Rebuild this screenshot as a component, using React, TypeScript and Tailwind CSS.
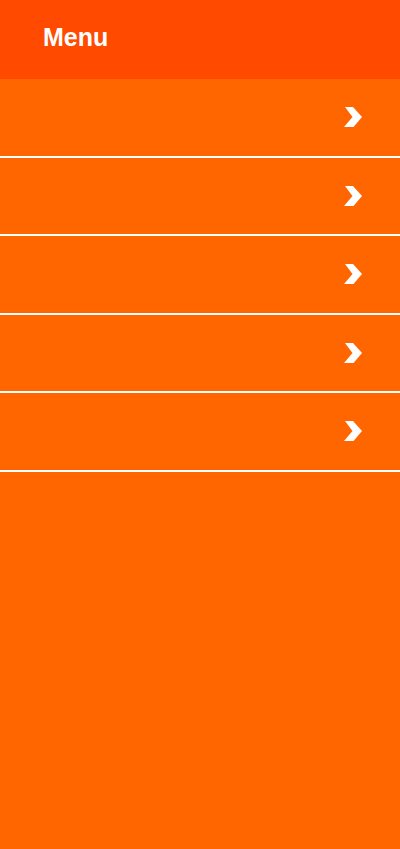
import React from "react";

const items = [0, 1, 2, 3, 4];

function Chevron() {
    return (
        <svg width="18" height="20" viewBox="0 0 18 20" className="block">
            <polygon points="1,0 9,0 18,10 9.5,20 0,20 8.5,10" fill="#ffffff" />
        </svg>
    );
}

export default function App() {
    return (
        <div className="w-[400px] h-[849px] bg-[#ff6600] font-['Liberation_Sans',Arial,sans-serif]">
            <div className="h-[79px] bg-[#ff4a00] flex items-center pl-[43px]">
                <h1 className="text-white text-[25px] font-bold leading-none mt-[-4px]">Menu</h1>
            </div>
            <ul>
                {items.map(i => (
                    <li key={i} className="h-[78.5px] border-b-2 border-white flex items-center justify-end pr-[38px]">
                        <Chevron />
                    </li>
                ))}
            </ul>
        </div>
    );
}
